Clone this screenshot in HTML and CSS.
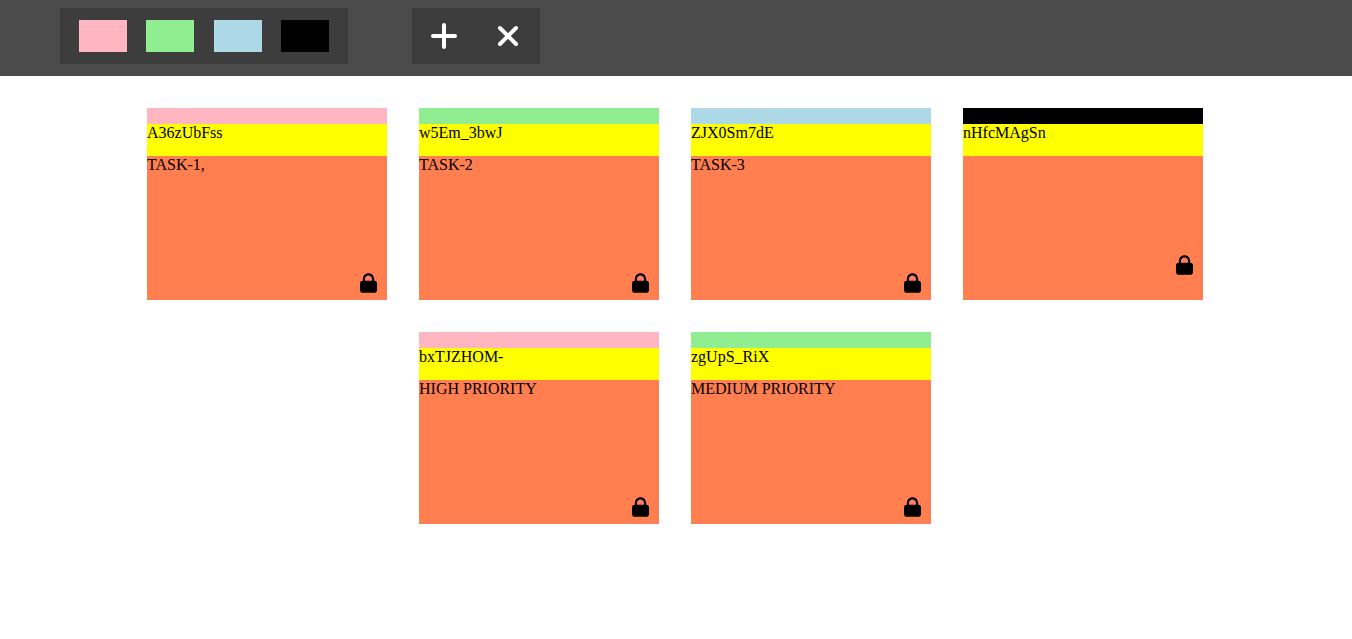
FILE: index.html
```html
<!DOCTYPE html>
<html lang="en">
<head>
<meta charset="utf-8">
<title>Tickets</title>
<link rel="stylesheet" href="styles.css">
</head>
<body>
<svg class="defs" width="0" height="0">
<symbol id="lock" viewBox="0 0 448 512"><path d="M132 146v50h184v-50c0-48-41-86-92-86s-92 38-92 86zM76 196v-50C76 65 142 0 224 0s148 65 148 146v50h8c38 0 68 30 68 68v180c0 38-30 68-68 68H68c-38 0-68-30-68-68V264c0-38 30-68 68-68h8z"/></symbol>
</svg>
<header class="toolbar">
<div class="priorities">
<div class="swatch pink"></div><div class="swatch green"></div><div class="swatch blue"></div><div class="swatch black"></div>
</div>
<div class="actions">
<div class="action"><svg class="plus" viewBox="0 0 26 26"><path d="M13 2V24M2 13H24"/></svg></div>
<div class="action"><svg class="cross" viewBox="0 0 26 26"><path d="M5 5L21 21M21 5L5 21"/></svg></div>
</div>
</header>
<main class="board">
<article class="ticket"><div class="band pink"></div><div class="ticket-id">A36zUbFss</div><div class="task">TASK-1,</div><svg class="lock"><use href="#lock"/></svg></article>
<article class="ticket"><div class="band green"></div><div class="ticket-id">w5Em_3bwJ</div><div class="task">TASK-2</div><svg class="lock"><use href="#lock"/></svg></article>
<article class="ticket"><div class="band blue"></div><div class="ticket-id">ZJX0Sm7dE</div><div class="task">TASK-3</div><svg class="lock"><use href="#lock"/></svg></article>
<article class="ticket"><div class="band black"></div><div class="ticket-id">nHfcMAgSn</div><div class="task empty"></div><svg class="lock"><use href="#lock"/></svg></article>
<article class="ticket"><div class="band pink"></div><div class="ticket-id">bxTJZHOM-</div><div class="task">HIGH PRIORITY</div><svg class="lock"><use href="#lock"/></svg></article>
<article class="ticket"><div class="band green"></div><div class="ticket-id">zgUpS_RiX</div><div class="task">MEDIUM PRIORITY</div><svg class="lock"><use href="#lock"/></svg></article>
</main>
</body>
</html>
```
FILE: styles.css
```css
* { box-sizing: border-box; }
body { margin: 0; background: white; color: black; font: 16px/18px "Liberation Serif", "Times New Roman", serif; }
.defs { display: none; }
.toolbar { display: flex; align-items: center; gap: 64px; height: 76px; padding: 0 60px 4px; background: #4b4b4b; }
.priorities, .actions { display: flex; align-items: center; height: 56px; background: #3d3d3d; }
.priorities { width: 288px; justify-content: space-evenly; }
.swatch { width: 48px; height: 32px; }
.pink { background: lightpink; }
.green { background: lightgreen; }
.blue { background: lightblue; }
.black { background: black; }
.action { display: flex; align-items: center; justify-content: center; width: 64px; height: 56px; }
.action svg { width: 26px; height: 26px; fill: none; stroke: white; stroke-width: 4; stroke-linecap: round; }
.board { display: flex; flex-wrap: wrap; justify-content: center; gap: 32px; padding: 32px 101px 0 99px; }
.ticket { display: flex; flex-direction: column; width: 240px; height: 192px; background: coral; }
.band { height: 16px; }
.ticket-id { height: 32px; background: yellow; }
.task { height: 117px; }
.task.empty { height: 99px; }
.lock { width: 17px; height: 20px; margin: 0 10px 0 auto; }
```
